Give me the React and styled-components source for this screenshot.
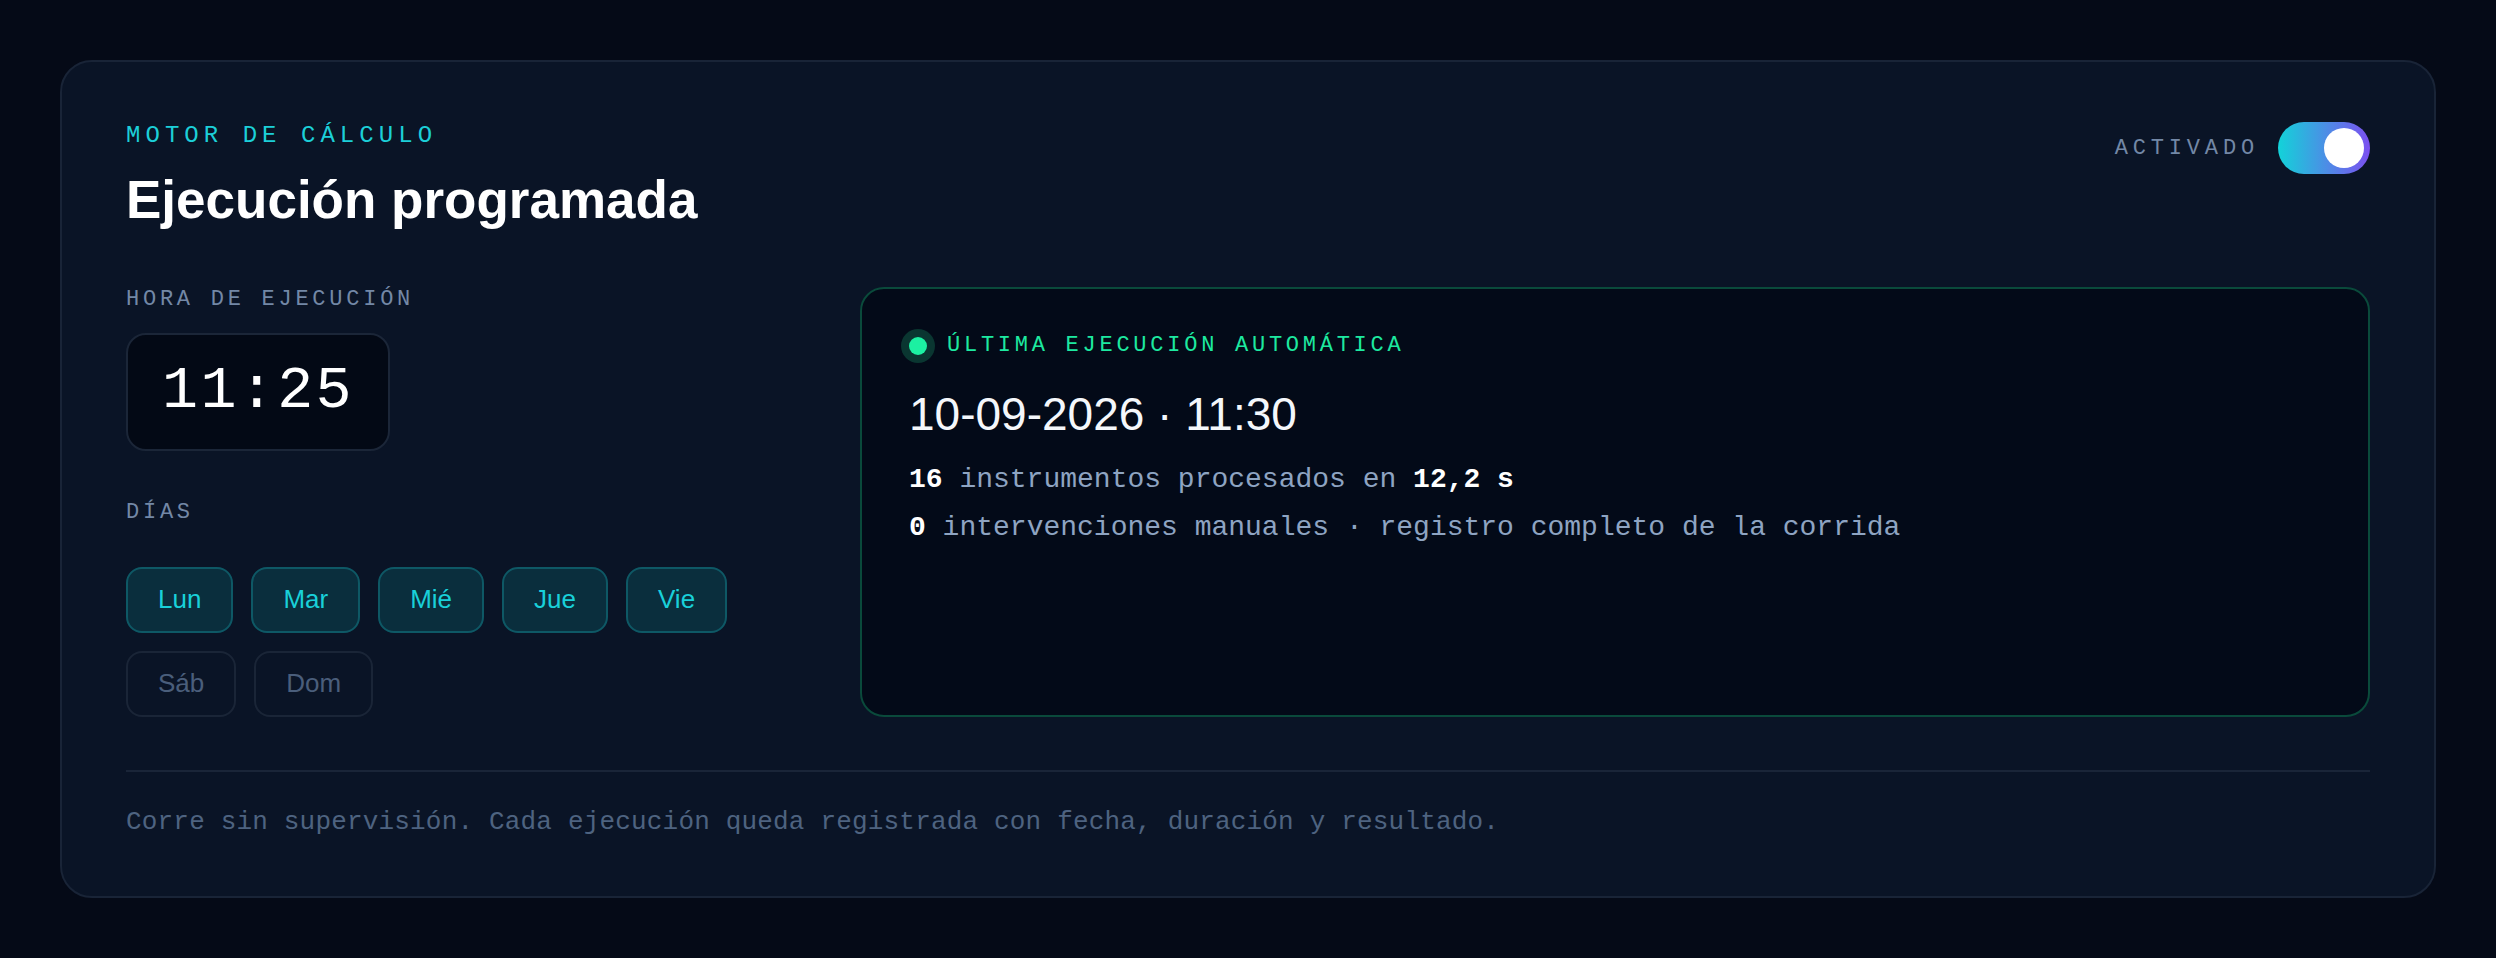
import styled, { createGlobalStyle } from "styled-components";

const mono = `"Liberation Mono", "DejaVu Sans Mono", monospace`;
const sans = `"Liberation Sans", Arial, sans-serif`;

const GlobalStyle = createGlobalStyle`
  html, body {
    margin: 0;
    background: #050a17;
  }
  body {
    padding: 60px;
    font-family: ${sans};
  }
  * { box-sizing: border-box; }
`;

const Card = styled.section`
  background: #0a1426;
  border: 2px solid #192437;
  border-radius: 32px;
  padding: 60px 64px 59px;
`;

const Header = styled.header`
  display: flex;
  justify-content: space-between;
  align-items: flex-start;
`;

const Eyebrow = styled.div`
  font-family: ${mono};
  font-size: 24px;
  line-height: 27.6px;
  letter-spacing: 0.21em;
  color: #1ccfd8;
`;

const Title = styled.h1`
  margin: 19px 0 0;
  font-size: 53px;
  line-height: 61px;
  font-weight: 700;
  color: #ffffff;
`;

const SwitchGroup = styled.div`
  display: flex;
  align-items: center;
  gap: 19px;
`;

const SmallLabel = styled.div`
  font-family: ${mono};
  font-size: 22px;
  line-height: 25px;
  letter-spacing: ${(p) => p.$spacing || "0.17em"};
  color: ${(p) => p.$color || "#7388a6"};
`;

const Toggle = styled.button`
  width: 92px;
  height: 52px;
  border: none;
  border-radius: 26px;
  padding: 6px;
  display: flex;
  justify-content: ${(p) => (p.$on ? "flex-end" : "flex-start")};
  background: linear-gradient(90deg, #12d3d9 0%, #4f8ae6 55%, #7b4ff0 100%);
  cursor: pointer;
`;

const Knob = styled.span`
  width: 40px;
  height: 40px;
  border-radius: 50%;
  background: #ffffff;
`;

const Body = styled.div`
  display: grid;
  grid-template-columns: 670px 1fr;
  column-gap: 64px;
  margin-top: 57px;
`;

const Column = styled.div`
  display: flex;
  flex-direction: column;
  align-items: flex-start;
`;

const TimeBox = styled.div`
  margin-top: 21px;
  background: #030915;
  border: 2px solid #1b2638;
  border-radius: 20px;
  padding: 26px 34px 28px;
  font-family: ${mono};
  font-size: 60px;
  line-height: 60px;
  letter-spacing: 0.04em;
  color: #ffffff;
`;

const DaysLabel = styled(SmallLabel)`
  margin-top: 49px;
`;

const Days = styled.div`
  margin-top: 42px;
  display: flex;
  flex-wrap: wrap;
  gap: 18px;
`;

const Day = styled.button`
  height: 66px;
  padding: 0 30px;
  border-radius: 16px;
  border: 2px solid ${(p) => (p.$active ? "#0e5865" : "#1a2537")};
  background: ${(p) => (p.$active ? "#0a2e3d" : "transparent")};
  color: ${(p) => (p.$active ? "#19d0d9" : "#4a5e7b")};
  font-family: ${sans};
  font-size: 26px;
  display: inline-flex;
  align-items: center;
  cursor: pointer;
`;

const Panel = styled.div`
  background: #030a18;
  border: 2px solid #0a4a3b;
  border-radius: 24px;
  padding: 45px 47px;
`;

const StatusRow = styled.div`
  display: flex;
  align-items: center;
  gap: 20px;
  height: 24px;
`;

const Dot = styled.span`
  width: 18px;
  height: 18px;
  border-radius: 50%;
  background: #1cf0a2;
  box-shadow: 0 0 0 8px #0a3631;
  flex: none;
`;

const RunDate = styled.div`
  margin-top: 29px;
  font-size: 46px;
  line-height: 55px;
  color: #f4f7fb;
`;

const Stats = styled.div`
  margin-top: 14px;
  font-family: ${mono};
  font-size: 28px;
  line-height: 48px;
  color: #8ea4c2;

  b {
    color: #ffffff;
    font-weight: 700;
  }
`;

const Divider = styled.hr`
  margin: 53px 0 0;
  border: none;
  height: 2px;
  background: #1a2538;
`;

const Note = styled.p`
  margin: 35px 0 0;
  font-family: ${mono};
  font-size: 26px;
  line-height: 30px;
  letter-spacing: 0.18px;
  color: #4e6380;
`;

const days = [
  { name: "Lun", active: true },
  { name: "Mar", active: true },
  { name: "Mié", active: true },
  { name: "Jue", active: true },
  { name: "Vie", active: true },
  { name: "Sáb", active: false },
  { name: "Dom", active: false },
];

export default function App() {
  return (
    <>
      <GlobalStyle />
      <Card>
        <Header>
          <div>
            <Eyebrow>MOTOR DE CÁLCULO</Eyebrow>
            <Title>Ejecución programada</Title>
          </div>
          <SwitchGroup>
            <SmallLabel $spacing="0.22em">ACTIVADO</SmallLabel>
            <Toggle $on aria-label="Activado">
              <Knob />
            </Toggle>
          </SwitchGroup>
        </Header>

        <Body>
          <Column>
            <SmallLabel>HORA DE EJECUCIÓN</SmallLabel>
            <TimeBox>11:25</TimeBox>
            <DaysLabel>DÍAS</DaysLabel>
            <Days>
              {days.map((d) => (
                <Day key={d.name} $active={d.active}>
                  {d.name}
                </Day>
              ))}
            </Days>
          </Column>

          <Panel>
            <StatusRow>
              <Dot />
              <SmallLabel $spacing="0.17em" $color="#1de9a0">
                ÚLTIMA EJECUCIÓN AUTOMÁTICA
              </SmallLabel>
            </StatusRow>
            <RunDate>10-09-2026 · 11:30</RunDate>
            <Stats>
              <div>
                <b>16</b> instrumentos procesados en <b>12,2 s</b>
              </div>
              <div>
                <b>0</b> intervenciones manuales · registro completo de la corrida
              </div>
            </Stats>
          </Panel>
        </Body>

        <Divider />
        <Note>
          Corre sin supervisión. Cada ejecución queda registrada con fecha, duración y resultado.
        </Note>
      </Card>
    </>
  );
}
